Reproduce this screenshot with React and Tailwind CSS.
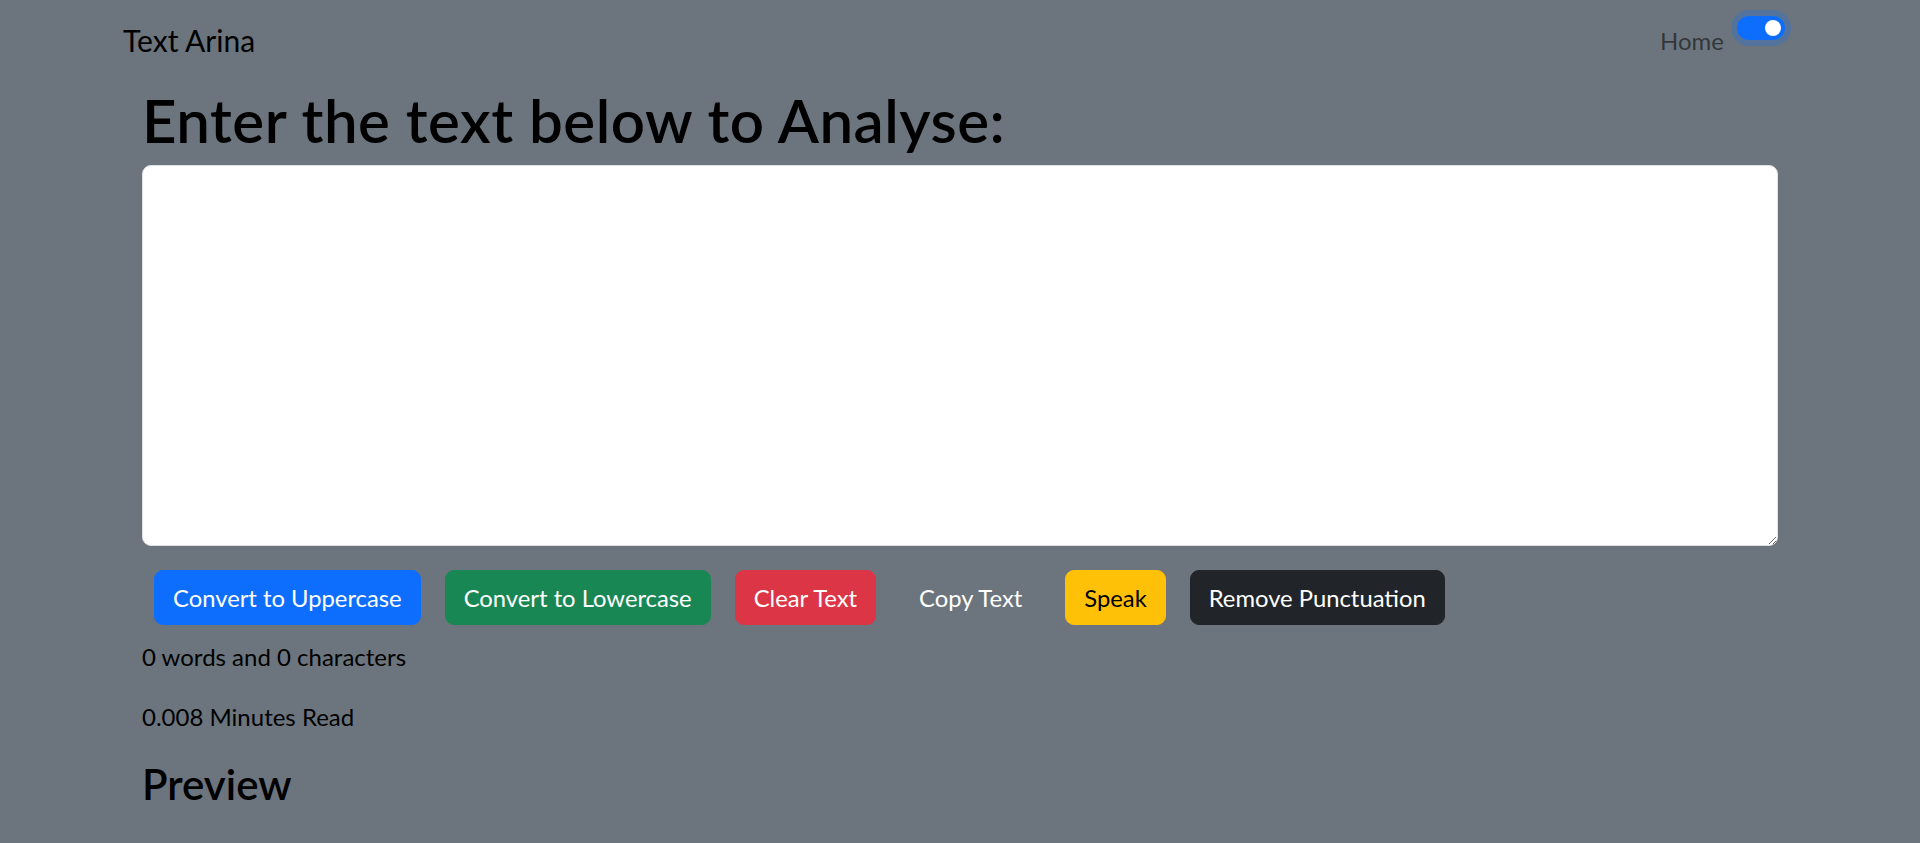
import React, { useState } from "react";

const buttons = [
  { label: "Convert to Uppercase", cls: "bg-[#0d6efd] border-[#0d6efd] text-white" },
  { label: "Convert to Lowercase", cls: "bg-[#198754] border-[#198754] text-white" },
  { label: "Clear Text", cls: "bg-[#dc3545] border-[#dc3545] text-white" },
  { label: "Copy Text", cls: "bg-transparent border-transparent text-white" },
  { label: "Speak", cls: "bg-[#ffc107] border-[#ffc107] text-black" },
  { label: "Remove Punctuation", cls: "bg-[#212529] border-[#212529] text-white" },
];

const App = () => {
  const [text, setText] = useState("");
  const words = text.split(/\s+/).filter((w) => w.length !== 0).length;
  const minutes = words === 0 ? "0.008" : (0.008 * words).toFixed(3);

  return (
    <div className="min-h-screen bg-[#6c757d] text-black font-['Lato','Liberation_Sans',sans-serif]">
      <nav className="flex h-[84px] items-start justify-between pl-[123px] pr-[135px]">
        <span className="mt-[18px] text-[30px] leading-[45px]">Text Arina</span>
        <div className="flex items-start">
          <span className="mt-[23px] text-[24px] leading-[36px] text-black/55">Home</span>
          <span className="mt-[16px] ml-[13px] flex h-[24px] w-[48px] items-center justify-end rounded-full bg-[#0d6efd] pr-[4px] shadow-[0_0_0_6px_rgba(13,110,253,0.25)]">
            <span className="h-[16px] w-[16px] rounded-full bg-white" />
          </span>
        </div>
      </nav>

      <main className="px-[142px] pb-8">
        <h1 className="mb-[9px] text-[60px] font-semibold leading-[72px] tracking-[0.5px]">
          Enter the text below to Analyse:
        </h1>
        <textarea
          value={text}
          onChange={(e) => setText(e.target.value)}
          className="block h-[381px] w-full rounded-[9px] border border-[#dee2e6] bg-white px-[18px] py-[9px] text-[24px] outline-none"
        />

        <div className="mt-[24px] flex gap-[24px] pl-[12px]">
          {buttons.map((b) => (
            <button
              key={b.label}
              className={`h-[55px] rounded-[9px] border px-[18px] text-[23.8px] leading-[36px] ${b.cls}`}
            >
              {b.label}
            </button>
          ))}
        </div>

        <p className="mt-[14px] mb-[24px] text-[24px] leading-[36px]">
          {words} words and {text.length} characters
        </p>
        <p className="mb-[24px] text-[24px] leading-[36px]">{minutes} Minutes Read</p>
        <h3 className="text-[42px] font-semibold leading-[50px]">Preview</h3>
      </main>
    </div>
  );
};

export default App;
